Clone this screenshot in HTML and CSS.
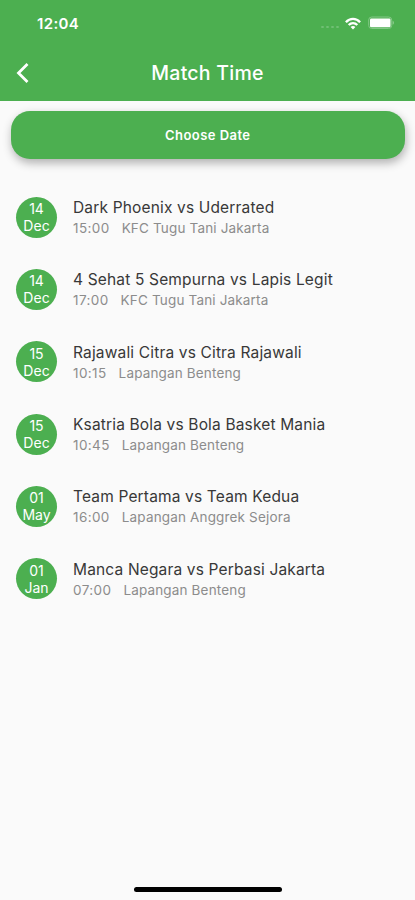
FILE: index.html
```html
<!DOCTYPE html>
<html lang="en">
<head>
<meta charset="utf-8">
<meta name="viewport" content="width=device-width, initial-scale=1">
<title>Match Time</title>
<link rel="stylesheet" href="styles.css">
</head>
<body>
<div class="screen">
  <header class="header">
    <div class="status">
      <span class="clock">12:04</span>
      <div class="indicators">
        <span class="dots"><i></i><i></i><i></i><i></i></span>
        <svg class="wifi" width="16" height="13" viewBox="0 0 16 13" fill="none" stroke="#fff" stroke-width="2.3"><path d="M.9 5.2C5 .7 11 .7 15.1 5.2M3.7 8c2.5-2.6 6.1-2.6 8.6 0"/><path d="M8 12.5L5.6 10C7 8.8 9 8.8 10.4 10Z" fill="#fff" stroke="none"/></svg>
        <svg class="battery" width="27" height="14" viewBox="0 0 27 14"><rect x=".7" y="1" width="23" height="11.5" rx="3" fill="none" stroke="#83c786"/><rect x="2" y="2.5" width="20.5" height="8.7" rx="1.2" fill="#fff"/><path d="M24.7 4.8v4c1.6-.6 1.6-3.4 0-4Z" fill="#94cf96"/></svg>
      </div>
    </div>
    <div class="bar">
      <svg class="back" width="14" height="22" viewBox="0 0 14 22" fill="none" stroke="#fff" stroke-width="2.8"><path d="M12.5 2L3.5 11l9 9"/></svg>
      <h1>Match Time</h1>
    </div>
  </header>
  <button class="choose">Choose Date</button>
  <main class="list">
    <article class="row"><div class="date"><span>14</span><span>Dec</span></div><div class="info"><h2>Dark Phoenix vs Uderrated</h2><p><span class="time">15:00</span><span>KFC Tugu Tani Jakarta</span></p></div></article>
    <article class="row"><div class="date"><span>14</span><span>Dec</span></div><div class="info"><h2>4 Sehat 5 Sempurna vs Lapis Legit</h2><p><span class="time">17:00</span><span>KFC Tugu Tani Jakarta</span></p></div></article>
    <article class="row"><div class="date"><span>15</span><span>Dec</span></div><div class="info"><h2>Rajawali Citra vs Citra Rajawali</h2><p><span class="time">10:15</span><span>Lapangan Benteng</span></p></div></article>
    <article class="row"><div class="date"><span>15</span><span>Dec</span></div><div class="info"><h2>Ksatria Bola vs Bola Basket Mania</h2><p><span class="time">10:45</span><span>Lapangan Benteng</span></p></div></article>
    <article class="row"><div class="date"><span>01</span><span>May</span></div><div class="info"><h2>Team Pertama vs Team Kedua</h2><p><span class="time">16:00</span><span>Lapangan Anggrek Sejora</span></p></div></article>
    <article class="row"><div class="date"><span>01</span><span>Jan</span></div><div class="info"><h2>Manca Negara vs Perbasi Jakarta</h2><p><span class="time">07:00</span><span>Lapangan Benteng</span></p></div></article>
  </main>
  <div class="home"></div>
</div>
</body>
</html>
```
FILE: styles.css
```css
* { box-sizing: border-box; margin: 0; }
body { font-family: Inter, "Liberation Sans", sans-serif; background: #fafafa; }
.screen { display: flex; flex-direction: column; height: 900px; background: #fafafa; overflow: hidden; }
.header { height: 100.5px; background: #4caf50; color: #fff; flex: none; }
.status { display: flex; justify-content: space-between; align-items: center; height: 46px; padding: 0 20px 0 37px; }
.clock { font-size: 15px; font-weight: 600; letter-spacing: 0.35px; }
.indicators { display: flex; align-items: center; }
.dots { display: flex; gap: 2px; margin: 8px 6px 0 0; }
.dots i { width: 3px; height: 2px; border-radius: 50%; background: #73c077; }
.wifi { margin-right: 7px; }
.bar { display: grid; grid-template-columns: 37px 1fr 37px; align-items: center; height: 54px; }
.back { margin-left: 15px; }
h1 { font-size: 19.5px; font-weight: 500; text-align: center; letter-spacing: 0.25px; }
.choose { flex: none; margin: 10.5px 10px 0 10.5px; height: 48px; border: 0; border-radius: 19px; background: #4caf50; color: #fff; font: 600 13px Inter, sans-serif; letter-spacing: 0.45px; box-shadow: 1px 4px 10px rgba(0, 0, 0, 0.3); }
.list { flex: 1; padding: 22px 16px 0; }
.row { display: flex; align-items: center; gap: 16px; height: 72.3px; }
.info { padding-top: 2px; }
.date { display: flex; flex-direction: column; align-items: center; justify-content: center; width: 41px; height: 41px; border-radius: 50%; background: #4caf50; color: #fff; font-size: 14px; line-height: 17px; }
h2 { font-size: 15.5px; line-height: 21px; font-weight: 400; letter-spacing: 0.16px; color: #383838; white-space: nowrap; }
p { display: flex; gap: 12px; font-size: 13.5px; line-height: 21px; color: #8c8c8c; letter-spacing: 0.16px; white-space: nowrap; }
.time { letter-spacing: 0.4px; }
.home { flex: none; align-self: center; width: 148px; height: 5px; margin-bottom: 8px; border-radius: 3px; background: #000; }
```
